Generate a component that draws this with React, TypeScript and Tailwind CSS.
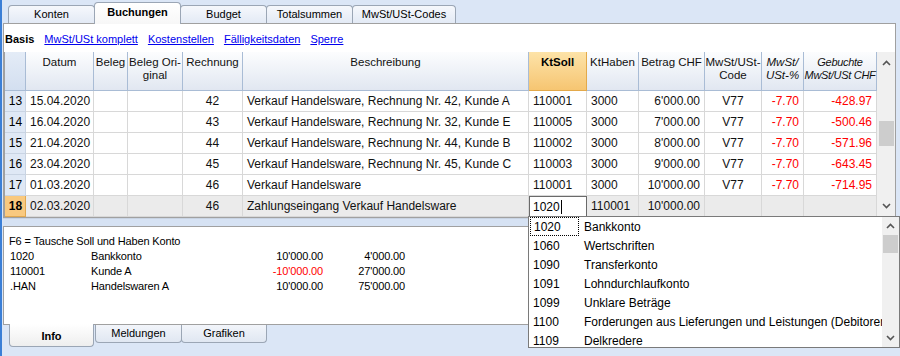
import React from "react";

type Row = {
  n: string;
  d: string;
  r: string;
  b: string;
  s: string;
  h: string;
  a: string;
  c: string;
  p: string;
  g: string;
};

const rows: Row[] = [
  { n: "13", d: "15.04.2020", r: "42", b: "Verkauf Handelsware, Rechnung Nr. 42, Kunde A", s: "110001", h: "3000", a: "6'000.00", c: "V77", p: "-7.70", g: "-428.97" },
  { n: "14", d: "16.04.2020", r: "43", b: "Verkauf Handelsware, Rechnung Nr. 32, Kunde E", s: "110005", h: "3000", a: "7'000.00", c: "V77", p: "-7.70", g: "-500.46" },
  { n: "15", d: "21.04.2020", r: "44", b: "Verkauf Handelsware, Rechnung Nr. 44, Kunde B", s: "110002", h: "3000", a: "8'000.00", c: "V77", p: "-7.70", g: "-571.96" },
  { n: "16", d: "23.04.2020", r: "45", b: "Verkauf Handelsware, Rechnung Nr. 45, Kunde C", s: "110003", h: "3000", a: "9'000.00", c: "V77", p: "-7.70", g: "-643.45" },
  { n: "17", d: "01.03.2020", r: "46", b: "Verkauf Handelsware", s: "110001", h: "3000", a: "10'000.00", c: "V77", p: "-7.70", g: "-714.95" },
];

const dropItems = [
  ["1020", "Bankkonto"],
  ["1060", "Wertschriften"],
  ["1090", "Transferkonto"],
  ["1091", "Lohndurchlaufkonto"],
  ["1099", "Unklare Beträge"],
  ["1100", "Forderungen aus Lieferungen und Leistungen (Debitoren)"],
  ["1109", "Delkredere"],
];

function Chevron({ up }: { up?: boolean }) {
  return (
    <svg width="9" height="6" viewBox="0 0 9 6">
      <path
        d={up ? "M1 5 L4.5 1.5 L8 5" : "M1 1 L4.5 4.5 L8 1"}
        stroke="#555"
        strokeWidth="1.6"
        fill="none"
      />
    </svg>
  );
}

const hdr =
  "h-[39px] border-r border-b border-[#a9bcd5] bg-gradient-to-b from-[#fcfdfe] to-[#e1e7f1] text-center pt-[4px] leading-[13px] text-[11.5px] text-[#111]";
const cell =
  "h-[21px] border-r border-b border-[#d8d8d8] flex items-center px-[4px] text-[12px] whitespace-nowrap overflow-hidden text-[#111]";

export default function App() {
  return (
    <div className="w-[900px] h-[356px] bg-[#dbe6f6] border-l-2 border-[#3b7fd6] relative overflow-hidden font-['Liberation_Sans',Arial,sans-serif] text-black">
      {/* top tabs */}
      <div className="h-[23px] flex items-end pl-[6px] relative z-10 text-[11px]">
        <div className="w-[87px] h-[18px] border border-[#9ba6b5] border-b-0 rounded-t-[4px] bg-gradient-to-b from-[#f6f8fc] to-[#e3eaf5] flex items-center justify-center">
          Konten
        </div>
        <div className="w-[87px] h-[22px] -ml-px translate-y-[1px] border border-[#9ba6b5] border-b-0 rounded-t-[4px] bg-gradient-to-b from-[#ffffff] to-[#f7f7f7] flex items-center justify-center font-bold pb-[2px]">
          Buchungen
        </div>
        <div className="w-[87px] h-[18px] -ml-px border border-[#9ba6b5] border-b-0 rounded-t-[4px] bg-gradient-to-b from-[#f6f8fc] to-[#e3eaf5] flex items-center justify-center">
          Budget
        </div>
        <div className="w-[87px] h-[18px] -ml-px border border-[#9ba6b5] border-b-0 rounded-t-[4px] bg-gradient-to-b from-[#f6f8fc] to-[#e3eaf5] flex items-center justify-center">
          Totalsummen
        </div>
        <div className="w-[104px] h-[18px] -ml-px border border-[#9ba6b5] border-b-0 rounded-t-[4px] bg-gradient-to-b from-[#f6f8fc] to-[#e3eaf5] flex items-center justify-center">
          MwSt/USt-Codes
        </div>
      </div>

      {/* main panel */}
      <div className="ml-[1px] w-[893px] h-[195px] border border-[#a0a0a0] bg-white flex flex-col">
        <div className="h-[28px] flex items-center pl-[1px] pt-[2px] gap-[10px] text-[11px]">
          <span className="font-bold">Basis</span>
          <span className="text-[#0000ee] underline">MwSt/USt komplett</span>
          <span className="text-[#0000ee] underline">Kostenstellen</span>
          <span className="text-[#0000ee] underline">Fälligkeitsdaten</span>
          <span className="text-[#0000ee] underline">Sperre</span>
        </div>
        <div className="flex flex-1">
          <div className="grid grid-cols-[21px_68px_34px_55px_60px_286px_58px_52px_66px_57px_42px_73px] border-l border-[#a0a0a0]">
            <div className="h-[39px] border-r border-b border-[#a9bcd5] bg-gradient-to-b from-[#e4ecf7] to-[#d3dff0]"></div>
            <div className={hdr}>Datum</div>
            <div className={hdr}>Beleg</div>
            <div className={hdr}>
              Beleg Ori-
              <br />
              ginal
            </div>
            <div className={hdr}>Rechnung</div>
            <div className={hdr}>Beschreibung</div>
            <div className="h-[39px] border-r border-b border-[#e3a94a] bg-gradient-to-b from-[#fde3a8] to-[#f6c571] text-center pt-[4px] leading-[13px] text-[11.5px] font-bold">
              KtSoll
            </div>
            <div className={hdr}>KtHaben</div>
            <div className={hdr}>Betrag CHF</div>
            <div className={hdr}>
              MwSt/USt-
              <br />
              Code
            </div>
            <div className={hdr + " italic"}>
              MwSt/
              <br />
              USt-%
            </div>
            <div className="h-[39px] border-r border-b border-[#a9bcd5] bg-gradient-to-b from-[#fcfdfe] to-[#e1e7f1] text-center pt-[4px] leading-[13px] text-[11px] tracking-[-0.3px] italic whitespace-nowrap text-[#111]">
              Gebuchte
              <br />
              MwSt/USt CHF
            </div>

            {rows.map((r) => (
              <React.Fragment key={r.n}>
                <div className="h-[21px] border-r border-b border-[#c9d4e3] bg-[#dfe8f5] flex items-center justify-center text-[12px] pl-[1px]">
                  {r.n}
                </div>
                <div className={cell}>{r.d}</div>
                <div className={cell}></div>
                <div className={cell}></div>
                <div className={cell + " justify-center"}>{r.r}</div>
                <div className={cell}>{r.b}</div>
                <div className={cell}>{r.s}</div>
                <div className={cell}>{r.h}</div>
                <div className={cell + " justify-end"}>{r.a}</div>
                <div className={cell + " justify-center"}>{r.c}</div>
                <div className={cell + " justify-end !text-[#ff0000]"}>{r.p}</div>
                <div className={cell + " justify-end !text-[#ff0000]"}>{r.g}</div>
              </React.Fragment>
            ))}

            {/* row 18 */}
            <div className="h-[21px] border-r border-b border-[#e0a850] bg-[#f9c97f] flex items-center justify-center text-[12px] font-bold pl-[1px]">
              18
            </div>
            <div className={cell + " bg-[#ebebeb]"}>02.03.2020</div>
            <div className={cell + " bg-[#ebebeb]"}></div>
            <div className={cell + " bg-[#ebebeb]"}></div>
            <div className={cell + " bg-[#ebebeb] justify-center"}>46</div>
            <div className={cell + " bg-[#ebebeb]"}>Zahlungseingang Verkauf Handelsware</div>
            <div className="h-[21px] border border-[#6a6a6a] bg-white flex items-center px-[3px] text-[12px]">
              1020
              <span className="inline-block w-px h-[14px] bg-black ml-[1px]"></span>
            </div>
            <div className={cell + " bg-[#ebebeb]"}>110001</div>
            <div className={cell + " bg-[#ebebeb] justify-end"}>10'000.00</div>
            <div className={cell + " bg-[#ebebeb]"}></div>
            <div className={cell + " bg-[#ebebeb]"}></div>
            <div className={cell + " bg-[#ebebeb]"}></div>
          </div>
          {/* scrollbar */}
          <div className="flex-1 bg-[#f0f0f0] flex flex-col items-center">
            <div className="h-[20px] flex items-center justify-center pt-[2px]">
              <Chevron up />
            </div>
            <div className="h-[49px]"></div>
            <div className="w-[15px] h-[25px] bg-[#cdcdcd]"></div>
            <div className="flex-1"></div>
            <div className="h-[20px] flex items-center justify-center pb-[2px]">
              <Chevron />
            </div>
          </div>
        </div>
      </div>

      {/* splitter */}
      <div className="h-[8px] ml-[1px] w-[893px] border-t border-[#c8d3e3] bg-[#d6e2f3]"></div>

      {/* info panel */}
      <div className="ml-[1px] w-[893px] h-[99px] border border-[#a0a0a0] bg-white pt-[7px] text-[11px] leading-[15px] tracking-[-0.15px]">
        <div className="pl-[5px]">F6 = Tausche Soll und Haben Konto</div>
        <div className="grid grid-cols-[81px_150px_82px_82px] pl-[6px]">
          <div>1020</div>
          <div>Bankkonto</div>
          <div className="text-right">10'000.00</div>
          <div className="text-right">4'000.00</div>
          <div>110001</div>
          <div>Kunde A</div>
          <div className="text-right text-[#ff0000]">-10'000.00</div>
          <div className="text-right">27'000.00</div>
          <div>.HAN</div>
          <div>Handelswaren A</div>
          <div className="text-right">10'000.00</div>
          <div className="text-right">75'000.00</div>
        </div>
      </div>

      {/* bottom tabs */}
      <div className="flex items-start pl-[7px] text-[11px]">
        <div className="w-[85px] h-[23px] -mt-px border border-[#9ba6b5] border-t-0 rounded-b-[4px] bg-gradient-to-b from-[#ffffff] to-[#eeeeee] flex items-center justify-center font-bold pt-[2px]">
          Info
        </div>
        <div className="w-[87px] h-[18px] ml-[1px] border border-[#9ba6b5] border-t-0 rounded-b-[4px] bg-gradient-to-b from-[#f2f5fa] to-[#e0e7f2] flex items-center justify-center">
          Meldungen
        </div>
        <div className="w-[86px] h-[18px] -ml-px border border-[#9ba6b5] border-t-0 rounded-b-[4px] bg-gradient-to-b from-[#f2f5fa] to-[#e0e7f2] flex items-center justify-center">
          Grafiken
        </div>
      </div>

      {/* dropdown */}
      <div className="absolute left-[526px] top-[216px] w-[372px] h-[132px] border border-[#7a7a7a] bg-white flex z-20">
        <div className="flex-1 min-w-0 overflow-hidden">
          {dropItems.map(([k, v], i) => (
            <div key={k} className="h-[19px] flex items-center text-[12px] whitespace-nowrap">
              <div
                className={
                  "w-[49px] shrink-0 h-[19px] flex items-center pl-[3px] ml-[1px] " +
                  (i === 0 ? "border border-dotted border-black" : "")
                }
              >
                {k}
              </div>
              <div className="pl-[5px] shrink-0">{v}</div>
            </div>
          ))}
        </div>
        <div className="w-[17px] shrink-0 bg-[#f0f0f0] flex flex-col items-center">
          <div className="h-[18px] flex items-center justify-center">
            <Chevron up />
          </div>
          <div className="w-[15px] h-[18px] bg-[#cdcdcd]"></div>
          <div className="flex-1"></div>
          <div className="h-[18px] flex items-center justify-center">
            <Chevron />
          </div>
        </div>
      </div>
    </div>
  );
}
